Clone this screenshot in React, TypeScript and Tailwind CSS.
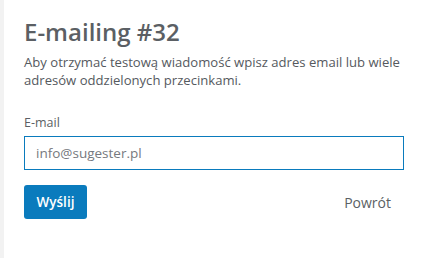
export default function App() {
  return (
    <div className="flex min-h-[258px] w-[423px] bg-white font-['Open_Sans',sans-serif]">
      <div className="w-[4px] shrink-0 bg-[#f2f2f2]" />
      <div className="flex-1 pl-[20px] pr-[19px] pt-[14px]">
        <h1 className="text-[24px] font-semibold leading-[36px] text-[#5b5f64]">E-mailing #32</h1>
        <p className="mt-[3px] text-[13.1px] leading-[18px] text-[#55595e]">
          Aby otrzymać testową wiadomość wpisz adres email lub wiele adresów oddzielonych przecinkami.
        </p>
        <label className="mt-[25px] block text-[12.5px] leading-[18px] text-[#5b5f64]">E-mail</label>
        <input
          defaultValue="info@sugester.pl"
          className="mt-[4px] block h-[34px] w-full border border-[#0a7bbd] px-[11px] text-[13.5px] text-[#76797e] outline-none"
        />
        <div className="mt-[15px] flex items-center justify-between">
          <button className="h-[34px] w-[63px] rounded-[3px] bg-[#0a7bbd] text-[13.5px] font-semibold text-white">
            Wyślij
          </button>
          <button className="mr-[13px] text-[14px] text-[#5b5f64]">Powrót</button>
        </div>
      </div>
    </div>
  );
}
